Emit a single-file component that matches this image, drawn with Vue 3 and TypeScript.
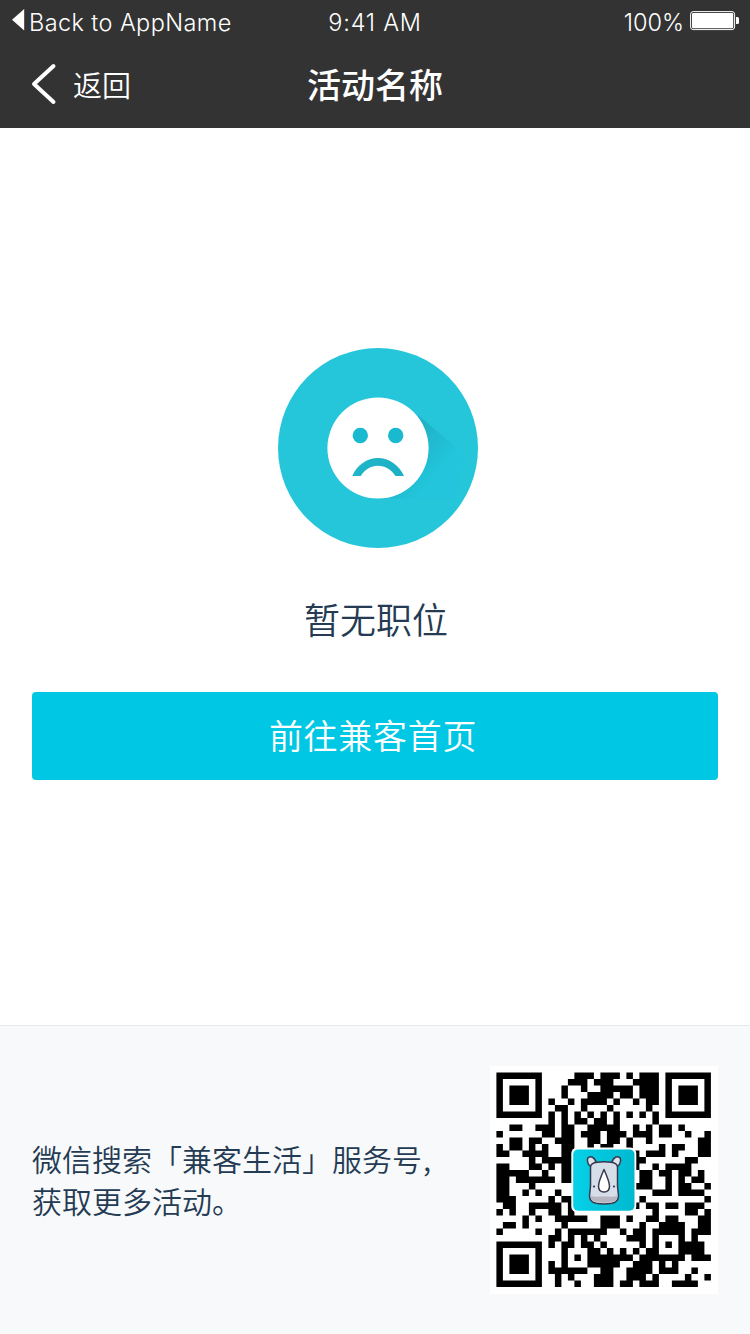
<script setup lang="ts">
// Dark module columns for each row of the code; finder patterns are added separately.
const rows: string[] = [
  '12-14 16-18 20 22-24',
  '11-13 15-17 21-24',
  '10 13 16-20 22-24',
  '10 14-17 19-20 22-24',
  '8 11 13-16 18 21 23-24',
  '9-10 13 17 23',
  '8 10 12 14 16 18 20 22 24',
  '8 10 12-13 15-16 18 24',
  '2-3 6-8 10-11 14-18 21 23 25-26 28',
  '0 7-8 10-11 13-15 17-19 21-23 25-26 29 32',
  '2-3 5-6 9-11 14-15 17-18 20 23 31-32',
  '0 2-3 5 7 10-11 14 16-17 20 25 27-28 31-32',
  '0-1 4-7 10-11 21 23-25 27 31-32',
  '5 7-11 21-22 29-30',
  '0-1 5-6 8 10-11 21 24 26-29',
  '0-4 7 10-11 22-23 25-26 28-29 31',
  '0-1 3-8 10-11 22-23 26 28 30-31',
  '0-1 5 21-23 26 28-29 32',
  '0-1 4 6 9 24-26 28-31',
  '0-2 8 10-11 22 32',
  '1-2 5-9 11 21 23-24 26-27 29-31',
  '0 2 5 8-9 11 24 29-30 32',
  '4 6 9-13 16-18 20 23-24 26-27 31-32',
  '1-2 4 10 16-18 22 25-28 31-32',
  '0 6 9 11-16 19 21-22 24-28 30-32',
  '8-9 11 13 15 20-22 24 28 30',
  '8 10-11 13-14 16 22 24 26 28-31',
  '10 14-15 17 19 21 23-24 28-31',
  '10 12 14-20 22-28 30-32',
  '8 10 14-18 21-23 25 27',
  '8-11 12-13 16-17 20-23 25-27 30',
  '9 11 15-17 20-22 24 29 32',
  '9 12 15-17 19-20 22-24 27-30',
]
const modules: string = rows
  .map((row, y) =>
    row.split(' ').map((run) => {
      const [a, b = a] = run.split('-').map(Number)
      return `M${a} ${y}H${b + 1}V${y + 1}H${a}Z`
    }).join(''),
  )
  .join('')
const finders: [number, number][] = [[0, 0], [26, 0], [0, 26]]
</script>

<template>
  <main class="page">
    <header class="top">
      <div class="status">
        <div class="back-app">
          <svg width="13" height="22" viewBox="0 0 13 22"><path d="M12.2 0V21.5L0 10.8Z" fill="#fff" /></svg>
          <span>Back to AppName</span>
        </div>
        <span class="time">9:41 AM</span>
        <div class="power">
          <span>100%</span>
          <svg width="50" height="20" viewBox="0 0 50 20">
            <rect x=".6" y=".6" width="44" height="18" rx="2.6" fill="none" stroke="#fff" />
            <rect x="2" y="2" width="41.2" height="15.2" rx="1.2" fill="#fff" />
            <path d="M46 6h1.5q1.5 0 1.5 1.5v4q0 1.500-1.500 1.500H46Z" fill="#fff" />
          </svg>
        </div>
      </div>
      <nav class="nav">
        <a class="back">
          <svg width="26" height="42" viewBox="0 0 26 42"><path d="M22.500 3L3 21 22.500 39" fill="none" stroke="#fff" stroke-width="4" stroke-linecap="round" stroke-linejoin="round" /></svg>
          <span>返回</span>
        </a>
        <h1>活动名称</h1>
      </nav>
    </header>

    <section class="empty">
      <svg class="face" width="200" height="200" viewBox="278 348 200 200">
        <defs>
          <linearGradient id="shade" gradientUnits="userSpaceOnUse" x1="402" y1="454" x2="432" y2="479">
            <stop offset="0" stop-color="#20b3c7" />
            <stop offset="1" stop-color="#22c5db" />
          </linearGradient>
          <linearGradient id="mouth" x1="0" y1="0" x2="1" y2="0">
            <stop offset="0" stop-color="#20b6ca" />
            <stop offset="1" stop-color="#1cb0c4" />
          </linearGradient>
        </defs>
        <circle cx="378" cy="448" r="100" fill="#26c6da" />
        <path d="M418 415L465 455 456 498.500H378Z" fill="url(#shade)" />
        <circle cx="378" cy="448" r="50.600" fill="#fff" />
        <circle cx="360.300" cy="435.500" r="7.700" fill="#19b9cf" />
        <circle cx="395.700" cy="435.500" r="7.700" fill="#19b9cf" />
        <path d="M352.300 476C357 465 367 458 378 458S399 465 404 476H395.500C391.500 469.500 385 465.700 378 465.700S364.500 469.500 360.800 476Z" fill="url(#mouth)" />
      </svg>
      <p>暂无职位</p>
      <button type="button">前往兼客首页</button>
    </section>

    <footer class="foot">
      <p>微信搜索「兼客生活」服务号<span class="comma">,</span><br />获取更多活动。</p>
      <svg class="qr" width="228" height="228" viewBox="0 0 228 228">
        <rect width="228" height="228" fill="#fff" />
        <g transform="translate(6.400 6.600) scale(6.500)">
          <path :d="modules" />
          <path v-for="[x, y] in finders" :key="`${x}-${y}`" :transform="`translate(${x} ${y})`" fill-rule="evenodd" d="M0 0H7V7H0ZM1 1V6H6V1ZM2 2H5V5H2Z" />
        </g>
        <defs>
          <linearGradient id="tile" x1="0" x2="1" y1="0" y2="0">
            <stop offset="0" stop-color="#05d1e8" /><stop offset="1" stop-color="#00b9cf" />
          </linearGradient>
        </defs>
        <rect x="81.300" y="81.500" width="65" height="65" rx="6" fill="#fff" />
        <rect x="83.200" y="83.400" width="61.300" height="61.300" rx="5" fill="url(#tile)" />
        <g stroke="#39394e" stroke-width="1.500" stroke-linejoin="round">
          <path d="M102.500 101C97 99.500 96 92 99.500 91 103 90 106 94 106.500 98ZM125.500 101C131 99.500 132 92 128.500 91 125 90 122 94 121.500 98Z" fill="#dce4ed" />
          <path d="M100.500 101Q101 97 107 96.300Q114 95 121 96.300Q127 97 127.500 101L127.500 120 128.500 130Q128.500 136 122 137.300Q114 138.500 106 137.300Q99.500 136 99.500 130L100.500 120Z" fill="#d5dee9" />
          <path d="M100.500 129.500Q105 131.500 109 130.500H119Q123 131.500 127.500 129.500Q127.500 135.500 121 136Q114 137.500 107 136Q100.500 135.500 100.500 129.500Z" fill="#b6b5c0" stroke="none" />
          <path d="M114 103.500C116 108 119.500 116 119.500 120Q119.500 126 114 126T108.500 120C108.500 116 112 108 114 103.500Z" fill="#fff" />
        </g>
        <circle cx="104" cy="120.500" r="1.100" fill="#39394e" />
        <circle cx="124" cy="120.500" r="1.100" fill="#39394e" />
      </svg>
    </footer>
  </main>
</template>

<style scoped>
.page {
  width: 750px;
  height: 1334px;
  display: flex;
  flex-direction: column;
  background: #fff;
  color: #243b53;
  font-family: Inter, "Noto Sans CJK SC", sans-serif;
}
.top {
  height: 128px;
  background: #333;
  color: #fff;
}
.status {
  height: 40px;
  display: grid;
  grid-template-columns: 1fr auto 1fr;
  font-size: 23.5px;
  font-weight: 350;
  line-height: 45px;
}
.back-app, .power {
  display: flex;
  align-items: flex-start;
}
.back-app { padding-left: 12px; }
.back-app svg { margin-top: 9px; }
.back-app span { margin-left: 4px; letter-spacing: .4px; white-space: nowrap; }
.time { letter-spacing: .75px; }
.power { justify-content: flex-end; padding-right: 10px; }
.power svg { margin: 11px 0 0 6px; }
.nav {
  height: 88px;
  display: grid;
  grid-template-columns: 1fr auto 1fr;
  align-items: center;
}
.back {
  display: flex;
  align-items: center;
  padding-left: 31px;
  font: 350 29px/40px "Noto Sans CJK SC", sans-serif;
}
.back span { margin-left: 16px; }
h1 {
  margin: 0;
  font: 500 34px/48px "Noto Sans CJK SC", sans-serif;
}
.empty {
  flex: 1;
  display: flex;
  flex-direction: column;
  align-items: center;
  padding: 220px 32px 0;
}
.face { margin-left: 6px; }
.empty p {
  margin: 44px 0 0;
  padding-left: 2px;
  font: 350 36px/52px "Noto Sans CJK SC", sans-serif;
}
button {
  width: 100%;
  height: 88px;
  margin-top: 48px;
  padding: 0 4px 2px 0;
  border: 0;
  border-radius: 4px;
  background: #00c8e4;
  color: #fff;
  font: 350 34px/86px "Noto Sans CJK SC", sans-serif;
  letter-spacing: .7px;
}
.foot {
  height: 309px;
  box-sizing: border-box;
  display: flex;
  justify-content: space-between;
  align-items: flex-start;
  padding: 40px 32px 0;
  border-top: 1px solid #e5e9ed;
  background: #f8f9fb;
}
.foot p {
  margin: 71px 0 0;
  font: 350 30px/42px "Noto Sans CJK SC", sans-serif;
}
.comma { margin-left: 1px; }
.qr { display: block; }
</style>

<style>
body { margin: 0; }
</style>
